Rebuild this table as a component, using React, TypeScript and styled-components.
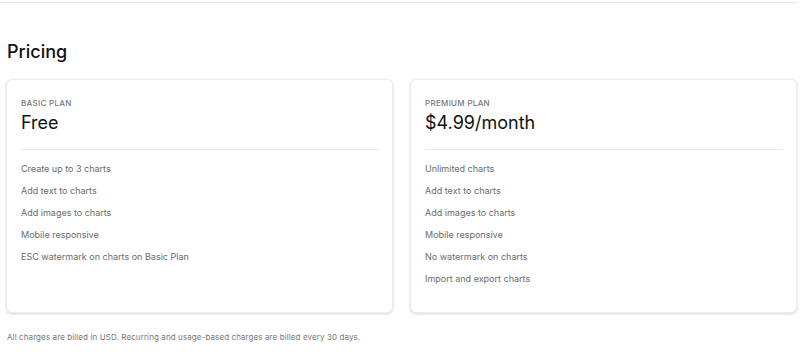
import React, { ReactElement } from "react"
import styled, { createGlobalStyle } from "styled-components"

const GlobalStyle = createGlobalStyle`
	body {
		margin: 0;
		background: #ffffff;
		font-family: Inter, "Noto Sans", sans-serif;
		color: #111111;
	}
`

const Page = styled.div`
	width: 800px;
	box-sizing: border-box;
`

const TopRule = styled.hr`
	margin: 2px 3px 0 0;
	border: none;
	border-top: 1px solid #e6e6e6;
`

const Section = styled.section`
	padding: 0 3px 0 6px;
`

const Heading = styled.h2`
	margin: 35px 0 0 1px;
	font-size: 18px;
	font-weight: 500;
	line-height: 28px;
	color: #111;
`

const PlanGrid = styled.div`
	display: grid;
	grid-template-columns: 1fr 1fr;
	gap: 17px;
	margin-top: 13px;
`

const PlanCard = styled.div`
	height: 234px;
	box-sizing: border-box;
	padding: 17px 13px 0 14px;
	border-radius: 6px;
	border: 1px solid #ececec;
	box-shadow: 0 1px 3px rgba(0, 0, 0, 0.16);
	background: #fff;
`

const PlanName = styled.div`
	font-size: 8px;
	font-weight: 500;
	letter-spacing: 0.3px;
	text-transform: uppercase;
	color: #777;
	line-height: 12px;
`

const PlanPrice = styled.div`
	font-size: 18px;
	font-weight: 400;
	color: #111;
	line-height: 24px;
	margin-top: 2px;
	padding-bottom: 14px;
	border-bottom: 1px solid #e8e8e8;
`

const FeatureList = styled.ul`
	list-style: none;
	margin: 8px 0 0;
	padding: 0;
`

const Feature = styled.li`
	font-size: 9px;
	line-height: 22px;
	color: #6b6b6b;
`

const Footnote = styled.p`
	margin: 19px 0 0 1px;
	font-size: 8px;
	color: #777;
	letter-spacing: 0.1px;
`

interface Plan {
	name: string
	price: string
	features: string[]
}

const plans: Plan[] = [
	{
		name: "Basic Plan",
		price: "Free",
		features: [
			"Create up to 3 charts",
			"Add text to charts",
			"Add images to charts",
			"Mobile responsive",
			"ESC watermark on charts on Basic Plan",
		],
	},
	{
		name: "Premium Plan",
		price: "$4.99/month",
		features: [
			"Unlimited charts",
			"Add text to charts",
			"Add images to charts",
			"Mobile responsive",
			"No watermark on charts",
			"Import and export charts",
		],
	},
]

export default function App(): ReactElement {
	return (
		<Page>
			<GlobalStyle />
			<TopRule />
			<Section>
				<Heading>Pricing</Heading>
				<PlanGrid>
					{plans.map((plan) => (
						<PlanCard key={plan.name}>
							<PlanName>{plan.name}</PlanName>
							<PlanPrice>{plan.price}</PlanPrice>
							<FeatureList>
								{plan.features.map((f) => (
									<Feature key={f}>{f}</Feature>
								))}
							</FeatureList>
						</PlanCard>
					))}
				</PlanGrid>
				<Footnote>
					All charges are billed in USD. Recurring and usage-based charges are billed every 30 days.
				</Footnote>
			</Section>
		</Page>
	)
}
